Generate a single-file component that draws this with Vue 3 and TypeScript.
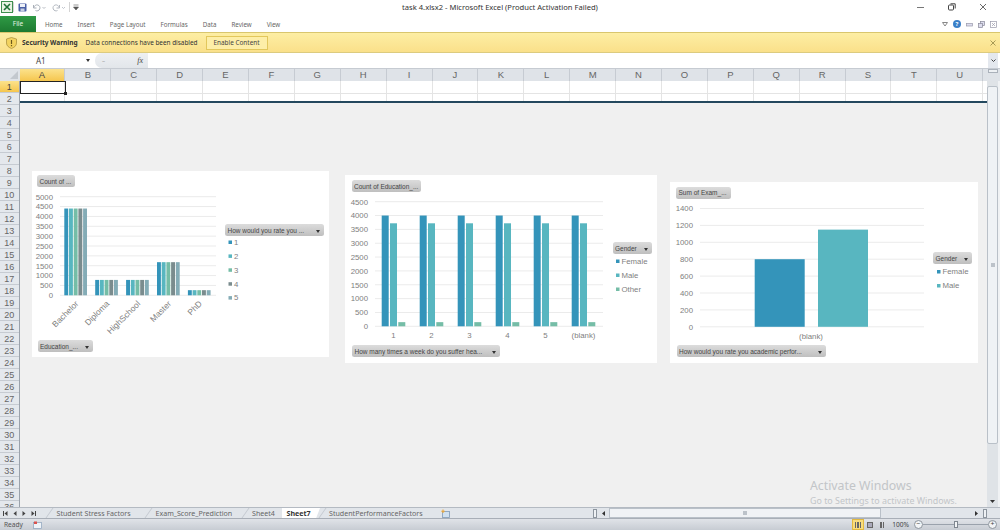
<script setup lang="ts">
interface Bar {
  x: number;
  width: number;
  value: number;
  color: string;
}

interface Chart {
  id: string;
  left: number;
  top: number;
  width: number;
  height: number;
  plotLeft: number;
  plotRight: number;
  plotTop: number;
  plotBottom: number;
  max: number;
  step: number;
  bars: Bar[];
  labels: { text: string; x: number }[];
  rotated: boolean;
  pills: { text: string; x: number; y: number; w: number; arrow: boolean }[];
  legend: { text: string; color: string; x: number; y: number }[];
}

const blue = '#3494ba';
const teal = '#58b6c0';
const green = '#75bda7';
const grey = '#7a8c8e';
const slate = '#84acb6';

const columns = 'ABCDEFGHIJKLMNOPQRSTU'.split('');
const rows = Array.from({ length: 36 }, (_, i) => i + 1);
const tabs = ['Home', 'Insert', 'Page Layout', 'Formulas', 'Data', 'Review', 'View'];
const sheets = [
  { name: 'Student Stress Factors', width: 99 },
  { name: 'Exam_Score_Prediction', width: 96.5 },
  { name: 'Sheet4', width: 40.5 },
  { name: 'Sheet7', width: 38 },
  { name: 'StudentPerformanceFactors', width: 118 }
];

const levels: number[] = [4400, 780, 780, 1680, 260];
const rateColors = [blue, teal, green, grey, slate];

const chart1: Chart = {
  id: 'rate',
  left: 32,
  top: 171,
  width: 297,
  height: 186,
  plotLeft: 28,
  plotRight: 184,
  plotTop: 25.7,
  plotBottom: 124.3,
  max: 5000,
  step: 500,
  bars: levels.flatMap((value, g) =>
    rateColors.map((color, i) => ({ x: 32.3 + g * 30.9 + i * 4.7, width: 3.9, value, color }))
  ),
  labels: ['Bachelor', 'Diploma', 'HighSchool', 'Master', 'PhD'].map((text, i) => ({ text, x: 47 + i * 30.9 })),
  rotated: true,
  pills: [
    { text: 'Count of ...', x: 5, y: 4, w: 38, arrow: false },
    { text: 'Education_...', x: 5.5, y: 169, w: 55, arrow: true },
    { text: 'How would you rate you ...', x: 193, y: 53, w: 98.5, arrow: true }
  ],
  legend: ['1', '2', '3', '4', '5'].map((text, i) => ({ text, color: rateColors[i], x: 196.5, y: 71 + i * 13.9 }))
};

const chart2: Chart = {
  id: 'gender',
  left: 345,
  top: 175,
  width: 312,
  height: 188,
  plotLeft: 30,
  plotRight: 258,
  plotTop: 26.7,
  plotBottom: 151.3,
  max: 4500,
  step: 500,
  bars: [0, 1, 2, 3, 4, 5].flatMap((g) => [
    { x: 36.7 + g * 38, width: 7, value: 4000, color: blue },
    { x: 45 + g * 38, width: 7, value: 3720, color: teal },
    { x: 53.3 + g * 38, width: 7, value: 150, color: green }
  ]),
  labels: ['1', '2', '3', '4', '5', '(blank)'].map((text, i) => ({ text, x: 48.5 + i * 38 })),
  rotated: false,
  pills: [
    { text: 'Count of Education_...', x: 6.5, y: 5, w: 69, arrow: false },
    { text: 'How many times a week do you suffer hea...', x: 7, y: 170, w: 148, arrow: true },
    { text: 'Gender', x: 267.5, y: 67, w: 39.5, arrow: true }
  ],
  legend: ['Female', 'Male', 'Other'].map((text, i) => ({
    text,
    color: [blue, teal, green][i],
    x: 271,
    y: 86 + i * 14
  }))
};

const chart3: Chart = {
  id: 'exam',
  left: 670,
  top: 181.5,
  width: 308,
  height: 181,
  plotLeft: 30,
  plotRight: 254,
  plotTop: 26.5,
  plotBottom: 144.8,
  max: 1400,
  step: 200,
  bars: [
    { x: 84.7, width: 50, value: 800, color: blue },
    { x: 148, width: 50, value: 1150, color: teal }
  ],
  labels: [{ text: '(blank)', x: 141 }],
  rotated: false,
  pills: [
    { text: 'Sum of Exam_...', x: 6, y: 5, w: 55, arrow: false },
    { text: 'How would you rate you academic perfor...', x: 6.5, y: 163.5, w: 149, arrow: true },
    { text: 'Gender', x: 263, y: 70.5, w: 39, arrow: true }
  ],
  legend: ['Female', 'Male'].map((text, i) => ({ text, color: [blue, teal][i], x: 267, y: 89.5 + i * 14 }))
};

const charts = [chart1, chart2, chart3];

const yFor = (c: Chart, v: number) => c.plotBottom - (v / c.max) * (c.plotBottom - c.plotTop);
const ticks = (c: Chart) => {
  const out: number[] = [];
  for (let v = 0; v <= c.max; v += c.step) out.push(v);
  return out;
};
const chartBox = (c: Chart) => ({
  left: `${c.left}px`,
  top: `${c.top}px`,
  width: `${c.width}px`,
  height: `${c.height}px`
});
const pillBox = (p: Chart['pills'][number]) => ({
  left: `${p.x}px`,
  top: `${p.y}px`,
  width: `${p.w}px`
});
</script>

<template>
  <div class="excel">
    <header class="title-bar">
      <div class="quick">
        <svg class="xl-logo" width="12" height="12" viewBox="0 0 12 12">
          <rect x="0.5" y="0.5" width="11" height="11" fill="#e8f3e4" stroke="#3f8f4f" />
          <path d="M3 3l6 6M9 3L3 9" stroke="#1d6f35" stroke-width="1.6" />
        </svg>
        <span class="sep"></span>
        <svg class="save" width="9" height="9" viewBox="0 0 9 9">
          <rect x="0.5" y="0.5" width="8" height="8" rx="1" fill="#4a5fa5" />
          <rect x="2" y="1" width="5" height="3" fill="#eef1f8" />
          <rect x="2.5" y="5.5" width="4" height="3" fill="#c8d0e4" />
        </svg>
        <svg class="undo" width="14" height="9" viewBox="0 0 14 9" fill="none" stroke="#a9afb8">
          <path d="M2 4.5a3 3 0 1 1 1.500 3M1.500 2v3h3" />
          <path d="M10.500 4l1.500 1.500L13.500 4" stroke-width="0.800" />
        </svg>
        <svg class="redo" width="14" height="9" viewBox="0 0 14 9" fill="none" stroke="#b4b9c1">
          <path d="M7 4.500a3 3 0 1 0-1.500 3M7.500 2v3h-3" />
          <path d="M10 4l1.500 1.500L13 4" stroke-width="0.800" />
        </svg>
        <span class="sep sep-end"></span>
        <svg class="more" width="6" height="7" viewBox="0 0 6 7"><path d="M0.500 1h5M0.500 3l2.500 3 2.500-3z" fill="#555" stroke="#555" stroke-width="0.600" /></svg>
      </div>
      <div class="doc-title">task 4.xlsx2 - Microsoft Excel (Product Activation Failed)</div>
      <div class="win-buttons">
        <svg width="8" height="8" viewBox="0 0 8 8"><path d="M0 4.500h7" stroke="#777" /></svg>
        <svg width="8" height="8" viewBox="0 0 8 8" fill="none" stroke="#444">
          <rect x="0.500" y="2" width="5" height="5" rx="1" />
          <path d="M2.500 0.800h4.700v4.700" />
        </svg>
        <svg width="8" height="8" viewBox="0 0 8 8"><path d="M1 1l6 6M7 1L1 7" stroke="#444" stroke-width="0.800" /></svg>
      </div>
    </header>

    <nav class="ribbon-tabs">
      <div class="file-tab">File</div>
      <div v-for="t in tabs" :key="t" class="ribbon-tab">{{ t }}</div>
      <div class="ribbon-right">
        <svg width="6" height="6" viewBox="0 0 6 6"><path d="M0.500 1.500h5L3 5z" fill="none" stroke="#888" /></svg>
        <span class="help">?</span>
        <svg width="7" height="7" viewBox="0 0 7 7"><rect x="0.500" y="2.500" width="6" height="2.500" fill="#dde" stroke="#99a" stroke-width="0.700" /></svg>
        <svg width="7" height="7" viewBox="0 0 7 7" fill="#dde" stroke="#889" stroke-width="0.700"><rect x="2.500" y="0.500" width="4" height="4" /><rect x="0.500" y="2.500" width="4" height="4" /></svg>
        <svg width="7" height="7" viewBox="0 0 7 7" fill="none" stroke="#99a" stroke-width="0.700"><rect x="0.500" y="0.500" width="6" height="6" /><path d="M2 2l3 3M5 2L2 5" /></svg>
      </div>
    </nav>

    <div class="warning-bar">
      <svg width="11" height="12" viewBox="0 0 11 12">
        <path d="M5.500 0.500L10.500 2v4c0 3-2.500 4.500-5 5.500-2.500-1-5-2.500-5-5.500V2z" fill="#f3d35f" stroke="#a58b3a" stroke-width="0.700" />
        <path d="M5.500 3v4M5.500 8v1.300" stroke="#6d5a1c" stroke-width="1.200" />
      </svg>
      <strong>Security Warning</strong>
      <span class="warn-text">Data connections have been disabled</span>
      <button class="enable">Enable Content</button>
      <svg class="warn-close" width="6" height="6" viewBox="0 0 6 6"><path d="M0.500 0.500l5 5M5.500 0.500l-5 5" stroke="#a89a55" stroke-width="1" /></svg>
    </div>

    <div class="formula-bar">
      <div class="name-box">A1<span class="name-arrow"></span></div>
      <div class="fx-box">
        <span class="fx-dash">&#8211;</span>
        <em>fx</em>
      </div>
      <div class="formula-input"></div>
      <div class="formula-expand">
        <svg width="5" height="4" viewBox="0 0 5 4"><path d="M0.500 0.500L2.500 2.500 4.500 0.500" fill="none" stroke="#444" /></svg>
      </div>
    </div>

    <div class="col-header">
      <div class="corner"><span class="corner-mark"></span></div>
      <div v-for="c in columns" :key="c" class="col" :class="{ active: c === 'A' }">{{ c }}</div>
      <div class="col-rest"><span class="split-v"></span></div>
    </div>

    <main class="sheet">
      <div class="row-header">
        <div v-for="r in rows" :key="r" class="row-num" :class="{ active: r === 1 }">{{ r }}</div>
      </div>
      <div class="canvas">
        <div class="cells">
          <div v-for="r in 2" :key="r" class="cell-row">
            <div v-for="c in columns" :key="c" class="cell"></div>
          </div>
          <div class="selected"></div>
        </div>
        <div class="freeze-line"></div>

        <section v-for="c in charts" :key="c.id" class="chart" :style="chartBox(c)">
          <svg :width="c.width" :height="c.height" class="plot">
            <g v-for="v in ticks(c)" :key="v">
              <line :x1="c.plotLeft" :x2="c.plotRight" :y1="yFor(c, v)" :y2="yFor(c, v)" stroke="#ebebeb" />
              <text class="axis" :x="c.plotLeft - 7" :y="yFor(c, v) + 2.800" text-anchor="end">{{ v }}</text>
            </g>
            <rect
              v-for="(b, i) in c.bars"
              :key="i"
              :x="b.x"
              :y="yFor(c, b.value)"
              :width="b.width"
              :height="c.plotBottom - yFor(c, b.value)"
              :fill="b.color"
            />
            <template v-for="l in c.labels" :key="l.text">
              <text
                v-if="c.rotated"
                class="axis axis-rot"
                text-anchor="end"
                :transform="`translate(${l.x} ${c.plotBottom + 9}) rotate(-45)`"
              >{{ l.text }}</text>
              <text v-else class="axis" :x="l.x" :y="c.plotBottom + 12" text-anchor="middle">{{ l.text }}</text>
            </template>
            <g v-for="e in c.legend" :key="e.text">
              <rect :x="e.x" :y="e.y - 1.500" width="3.500" height="3.500" :fill="e.color" />
              <text class="axis" :x="e.x + 5.500" :y="e.y + 2.800">{{ e.text }}</text>
            </g>
          </svg>
          <div v-for="p in c.pills" :key="p.text" class="pill" :style="pillBox(p)">
            <span>{{ p.text }}</span>
            <i v-if="p.arrow" class="pill-arrow"></i>
          </div>
        </section>

        <div class="watermark">
          <div class="wm-big">Activate Windows</div>
          <div class="wm-small">Go to Settings to activate Windows.</div>
        </div>
      </div>
      <aside class="v-scroll">
        <div class="sb-btn sb-up"><svg width="5" height="3" viewBox="0 0 5 3"><path d="M0 3h5L2.500 0z" fill="#333" /></svg></div>
        <div class="sb-track">
          <div class="sb-thumb"><span class="grip"></span></div>
        </div>
        <div class="sb-btn"><svg width="5" height="3" viewBox="0 0 5 3"><path d="M0 0h5L2.500 3z" fill="#333" /></svg></div>
      </aside>
    </main>

    <div class="tab-bar">
      <div class="tab-nav">
        <svg width="5" height="5" viewBox="0 0 5 5"><path d="M0.500 0v5" stroke="#444" /><path d="M4.500 0v5L1.500 2.500z" fill="#444" /></svg>
        <svg width="4" height="5" viewBox="0 0 4 5"><path d="M3.500 0v5L0.500 2.500z" fill="#444" /></svg>
        <svg width="4" height="5" viewBox="0 0 4 5"><path d="M0.500 0v5l3-2.500z" fill="#444" /></svg>
        <svg width="5" height="5" viewBox="0 0 5 5"><path d="M0.500 0v5l3-2.500z" fill="#444" /><path d="M4.500 0v5" stroke="#444" /></svg>
      </div>
      <div
        v-for="s in sheets"
        :key="s.name"
        class="sheet-tab"
        :class="{ current: s.name === 'Sheet7' }"
        :style="{ width: `${s.width}px` }"
      >{{ s.name }}</div>
      <svg class="new-sheet" width="9" height="9" viewBox="0 0 9 9">
        <rect x="1.500" y="2.500" width="7" height="6" fill="#cfe0f0" stroke="#7f99b5" stroke-width="0.800" />
        <path d="M2 0.500v3.500M0.300 2.200h3.500" stroke="#eba83a" stroke-width="1.100" />
      </svg>
      <div class="h-scroll">
        <span class="h-split"></span>
        <svg class="h-left" width="3" height="5" viewBox="0 0 3 5"><path d="M3 0v5L0 2.500z" fill="#333" /></svg>
        <div class="h-thumb"><span class="h-grip"></span></div>
        <div class="h-track">
          <svg width="3" height="5" viewBox="0 0 3 5"><path d="M0 0v5l3-2.500z" fill="#333" /></svg>
        </div>
        <span class="h-split h-split-end"></span>
      </div>
    </div>

    <footer class="status-bar">
      <span class="ready">Ready</span>
      <svg class="macro" width="9" height="8" viewBox="0 0 9 8">
        <rect x="0.500" y="1.500" width="8" height="6" fill="#eef3f8" stroke="#8aa2bb" stroke-width="0.700" />
        <rect x="1" y="0.500" width="3" height="2.500" fill="#d9534f" />
      </svg>
      <div class="status-right">
        <div class="views">
          <span class="view active"><i></i><i></i><i></i></span>
          <span class="view"><b></b></span>
          <span class="view"><i></i><i></i></span>
        </div>
        <span class="zoom-pct">100%</span>
        <span class="zoom-btn">&#8722;</span>
        <div class="zoom-track"><span class="zoom-knob"></span></div>
        <span class="zoom-btn">+</span>
      </div>
    </footer>
  </div>
</template>

<style>
html,
body {
  margin: 0;
  background: #fff;
}
</style>

<style scoped>
.excel {
  width: 1000px;
  height: 530px;
  display: flex;
  flex-direction: column;
  overflow: hidden;
  font-family: 'Noto Sans', 'Open Sans', sans-serif;
  font-size: 6.200px;
  color: #444;
  background: #fff;
}

.title-bar {
  height: 16px;
  flex: none;
  box-sizing: border-box;
  padding-bottom: 2px;
  display: flex;
  align-items: center;
  position: relative;
  background: #fff;
}

.quick {
  display: flex;
  align-items: center;
  padding-left: 1px;
}

.sep {
  width: 1px;
  height: 10px;
  background: #d4d4d4;
}

.save {
  margin-left: 4px;
}

.undo {
  margin-left: 5px;
}

.redo {
  margin-left: 6px;
}

.sep-end {
  margin-left: 3px;
}

.more {
  margin-left: 3px;
}

.doc-title {
  position: absolute;
  left: 0;
  right: 0;
  text-align: center;
  font-size: 7.600px;
  color: #333;
}

.win-buttons {
  margin-left: auto;
  margin-right: 13px;
  display: flex;
  gap: 23px;
}

.ribbon-tabs {
  height: 16px;
  flex: none;
  display: flex;
  align-items: center;
  background: #fff;
}

.file-tab {
  width: 36px;
  height: 16px;
  margin-right: 9px;
  line-height: 15px;
  text-align: center;
  font-size: 6.500px;
  color: #e4f2e4;
  background: linear-gradient(#2f9a45, #1d7a31);
}

.ribbon-tab {
  margin-right: 15px;
  color: #666;
}

.ribbon-right {
  margin-left: auto;
  margin-right: 3px;
  display: flex;
  align-items: center;
  gap: 5px;
}

.help {
  width: 8px;
  height: 8px;
  border-radius: 50%;
  background: #3a80c8;
  color: #fff;
  font-size: 6px;
  line-height: 8px;
  text-align: center;
  font-weight: 700;
}

.warning-bar {
  height: 21px;
  flex: none;
  box-sizing: border-box;
  display: flex;
  align-items: center;
  padding: 0 4px 0 6px;
  background: linear-gradient(#fdeea4, #fae08a);
  border-top: 1px solid #d9c66e;
  border-bottom: 1px solid #dccb7f;
  color: #333;
}

.warning-bar strong {
  margin-left: 5px;
  font-size: 6.500px;
}

.warn-text {
  margin-left: 8px;
  font-size: 6.400px;
}

.enable {
  margin-left: 8px;
  width: 62px;
  height: 14px;
  padding: 0;
  border: 1px solid #e2c75c;
  background: #fdeea8;
  font: inherit;
  font-size: 6.400px;
  color: #444;
}

.warn-close {
  margin-left: auto;
}

.formula-bar {
  height: 15px;
  flex: none;
  display: flex;
  background: #fff;
}

.name-box {
  width: 95px;
  position: relative;
  font-size: 8px;
  line-height: 15px;
  padding-left: 36px;
  box-sizing: border-box;
}

.name-arrow {
  position: absolute;
  left: 86px;
  top: 6px;
  border: 2.500px solid transparent;
  border-top: 3px solid #333;
}

.fx-box {
  width: 53px;
  display: flex;
  justify-content: space-between;
  align-items: center;
  padding: 0 5px 0 7px;
  box-sizing: border-box;
  background: linear-gradient(#eef0f3, #e2e6ea);
  border-radius: 7px 0 0 7px;
  color: #aaa;
}

.fx-box em {
  font-family: 'Liberation Serif', serif;
  font-size: 8px;
  color: #444;
}

.formula-input {
  flex: 1;
}

.formula-expand {
  width: 10px;
  margin-right: 2px;
  background: #e4e8ee;
  display: flex;
  align-items: center;
  justify-content: center;
}

.col-header {
  height: 13px;
  flex: none;
  display: flex;
  background: #dfe3e8;
  border-top: 1px solid #c6cbd2;
  box-sizing: border-box;
}

.corner {
  width: 19.500px;
  flex: none;
  position: relative;
}

.corner-mark {
  position: absolute;
  right: 2px;
  bottom: 2px;
  border-left: 8px solid transparent;
  border-bottom: 8px solid #c3c8ce;
}

.col {
  width: 45.900px;
  flex: none;
  box-sizing: border-box;
  text-align: center;
  font-family: 'Liberation Sans', sans-serif;
  font-size: 9.500px;
  line-height: 12px;
  color: #666;
  border-right: 1px solid #c6cbd2;
}

.col.active {
  background: linear-gradient(#fbe28c, #f5c64e);
  color: #444;
}

.col-rest {
  flex: 1;
  position: relative;
}

.split-v {
  position: absolute;
  right: 2px;
  top: 0;
  width: 10px;
  height: 4px;
  background: #eef1f4;
  border: 1px solid #aab1ba;
  box-sizing: border-box;
}

.sheet {
  flex: 1;
  min-height: 0;
  display: flex;
  overflow: hidden;
}

.row-header {
  width: 19.500px;
  flex: none;
  overflow: hidden;
  background: #e4e8ed;
  border-right: 1px solid #9aa2ac;
  box-sizing: border-box;
}

.row-num {
  height: 12px;
  box-sizing: border-box;
  text-align: center;
  font-family: 'Liberation Sans', sans-serif;
  font-size: 9px;
  line-height: 12px;
  color: #666;
  border-bottom: 1px solid #c6cbd2;
}

.row-num.active {
  background: linear-gradient(#fbe28c, #f5c64e);
  color: #444;
}

.canvas {
  flex: 1;
  position: relative;
  background: #f0f0f0;
}

.cells {
  position: relative;
  background: #fff;
}

.cell-row {
  display: flex;
  height: 12.500px;
  box-sizing: border-box;
  border-bottom: 1px solid #e4e4e4;
}

.cell-row:nth-child(2) {
  height: 7.500px;
  border-bottom: 0;
}

.cell {
  width: 45.900px;
  flex: none;
  box-sizing: border-box;
  border-right: 1px solid #e4e4e4;
}

.selected {
  position: absolute;
  left: 0;
  top: 0;
  width: 46px;
  height: 13px;
  box-sizing: border-box;
  border: 1.500px solid #222;
}

.selected::after {
  content: '';
  position: absolute;
  right: -2px;
  bottom: -2px;
  width: 3px;
  height: 3px;
  background: #222;
}

.freeze-line {
  height: 1.500px;
  background: #24485e;
}

.chart {
  position: absolute;
  margin-left: -19.500px;
  margin-top: -81px;
  background: #fff;
}

.plot {
  display: block;
}

.axis {
  font-family: 'Liberation Sans', sans-serif;
  font-size: 7.800px;
  fill: #808080;
}

.axis-rot {
  font-size: 8.400px;
}

.pill {
  position: absolute;
  height: 12px;
  box-sizing: border-box;
  display: flex;
  align-items: center;
  justify-content: space-between;
  padding: 0 4px 0 2.500px;
  border-radius: 2.500px;
  background: linear-gradient(#dcdcdc, #bfbfbf);
  white-space: nowrap;
  overflow: hidden;
  font-family: 'Liberation Sans', sans-serif;
  font-size: 6.500px;
  color: #444;
}

.pill-arrow {
  width: 0;
  height: 0;
  flex: none;
  margin-top: 2px;
  border: 2.500px solid transparent;
  border-top: 3px solid #333;
  border-bottom: 0;
}

.watermark {
  position: absolute;
  left: 790.500px;
  top: 396.500px;
  white-space: nowrap;
  color: #c2c5c8;
}

.wm-big {
  font-size: 12.300px;
  line-height: 15px;
}

.wm-small {
  font-size: 8.900px;
  line-height: 13px;
  margin-top: 1px;
}

.v-scroll {
  width: 13px;
  flex: none;
  box-sizing: border-box;
  padding-right: 2px;
  display: flex;
  flex-direction: column;
  background: #f0f2f4;
}

.sb-btn {
  height: 11px;
  flex: none;
  display: flex;
  align-items: center;
  justify-content: center;
  background: #dfe3e7;
}

.sb-up {
  height: 5px;
  align-items: flex-start;
}

.sb-up svg {
  margin-top: -3px;
}

.sb-track {
  flex: 1;
  display: flex;
  padding-bottom: 52px;
  background: #dfe3e7;
}

.sb-thumb {
  flex: 1;
  display: flex;
  align-items: center;
  justify-content: center;
  background: #eff2f5;
  border: 1px solid #b9c0c8;
  border-radius: 2px;
}

.grip {
  width: 4px;
  height: 4px;
  background: #bcc2c9;
}

.tab-bar {
  height: 11px;
  flex: none;
  display: flex;
  align-items: center;
  box-sizing: border-box;
  background: #e1e5ea;
  border-top: 1px solid #b4bac2;
  font-size: 7.100px;
  color: #666;
}

.tab-nav {
  width: 46px;
  flex: none;
  display: flex;
  align-items: center;
  padding-left: 3px;
  gap: 5px;
  box-sizing: border-box;
}

.sheet-tab {
  height: 10px;
  flex: none;
  line-height: 10px;
  box-sizing: border-box;
  padding-left: 10.500px;
  position: relative;
  white-space: nowrap;
}

.sheet-tab::before {
  content: '';
  position: absolute;
  left: 3px;
  top: 0;
  width: 1px;
  height: 10px;
  background: #c4c9d0;
  transform: skewX(-35deg);
}

.sheet-tab.current {
  padding-left: 4.500px;
  margin-right: -1.500px;
  background: #fff;
  color: #333;
  font-weight: 700;
  clip-path: polygon(0 0, 100% 0, 90% 100%, 0 100%);
}

.sheet-tab.current::before {
  display: none;
}

.new-sheet {
  margin-left: 4px;
}

.h-scroll {
  margin-left: auto;
  display: flex;
  align-items: center;
  height: 10px;
  width: 407px;
}

.h-left {
  margin-left: 4.500px;
  margin-right: 4px;
}

.h-thumb {
  width: 272px;
  height: 10px;
  background: #f0f2f5;
  border: 1px solid #b9c0c8;
  box-sizing: border-box;
  display: flex;
  align-items: center;
  justify-content: center;
}

.h-grip {
  width: 4px;
  height: 4px;
  background: #bcc2c9;
}

.h-track {
  flex: 1;
  display: flex;
  justify-content: flex-end;
  padding-right: 5px;
}

.h-split {
  width: 4px;
  height: 9px;
  flex: none;
  background: #eef1f4;
  border: 1px solid #8d959e;
  box-sizing: border-box;
}

.h-split-end {
  margin-right: 13px;
}

.status-bar {
  height: 12px;
  flex: none;
  display: flex;
  align-items: center;
  box-sizing: border-box;
  padding-left: 4px;
  padding-right: 3px;
  background: linear-gradient(#e0e3e8, #c7ccd3);
  border-top: 1px solid #a8aeb7;
}

.ready {
  font-size: 6.600px;
  color: #555;
  width: 29px;
}

.status-right {
  margin-left: auto;
  display: flex;
  align-items: center;
}

.views {
  display: flex;
  margin-right: 4px;
}

.view {
  width: 12px;
  height: 11px;
  box-sizing: border-box;
  display: flex;
  align-items: center;
  justify-content: center;
  gap: 1px;
}

.view.active {
  background: #f8dc7c;
  border: 1px solid #e3b93f;
}

.view i {
  width: 1.500px;
  height: 6px;
  background: #666;
}

.view b {
  width: 6px;
  height: 6px;
  background: #aab;
  border: 1px solid #666;
  box-sizing: border-box;
}

.zoom-pct {
  font-size: 6.600px;
  margin-right: 5px;
}

.zoom-btn {
  width: 9px;
  height: 9px;
  box-sizing: border-box;
  border: 1px solid #8d959e;
  border-radius: 50%;
  background: #f2f4f6;
  font-size: 7px;
  line-height: 6px;
  text-align: center;
  color: #444;
}

.zoom-track {
  width: 65px;
  height: 1px;
  background: #9aa2ac;
  position: relative;
}

.zoom-knob {
  position: absolute;
  left: 31px;
  top: -3px;
  width: 4px;
  height: 7px;
  background: #f2f4f6;
  border: 1px solid #7f8790;
  box-sizing: border-box;
}
</style>
